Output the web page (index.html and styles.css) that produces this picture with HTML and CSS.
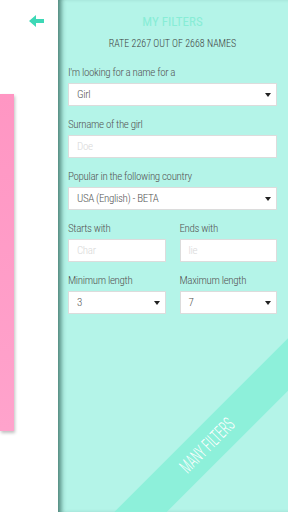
FILE: index.html
```html
<!DOCTYPE html>
<html>
<head>
<meta charset="utf-8">
<link rel="stylesheet" href="styles.css">
</head>
<body>
<div class="app">
  <aside class="side">
    <svg class="back" width="16" height="14" viewBox="0 0 16 14">
      <path d="M0 7 L7 1 L7 5 L15 5 L15 9 L7 9 L7 13 Z" fill="#3dd8b6"/>
    </svg>
    <div class="card"></div>
  </aside>
  <main class="panel">
    <h1 class="title">MY FILTERS</h1>
    <p class="subtitle">RATE 2267 OUT OF 2668 NAMES</p>
    <div class="form">
      <div class="field">
        <label class="label">I'm looking for a name for a</label>
        <div class="box select"><span class="value">Girl</span><span class="caret"></span></div>
      </div>
      <div class="field">
        <label class="label">Surname of the girl</label>
        <div class="box"><span class="placeholder">Doe</span></div>
      </div>
      <div class="field">
        <label class="label">Popular in the following country</label>
        <div class="box select"><span class="value">USA (English) - BETA</span><span class="caret"></span></div>
      </div>
      <div class="row">
        <div class="field">
          <label class="label">Starts with</label>
          <div class="box"><span class="placeholder">Char</span></div>
        </div>
        <div class="field">
          <label class="label">Ends with</label>
          <div class="box"><span class="placeholder">lie</span></div>
        </div>
      </div>
      <div class="row">
        <div class="field">
          <label class="label">Minimum length</label>
          <div class="box select"><span class="value">3</span><span class="caret"></span></div>
        </div>
        <div class="field">
          <label class="label">Maximum length</label>
          <div class="box select"><span class="value">7</span><span class="caret"></span></div>
        </div>
      </div>
    </div>
    <div class="ribbon"><span class="ribbon-text">MANY FILTERS</span></div>
  </main>
</div>
</body>
</html>
```
FILE: styles.css
```css
* { box-sizing: border-box; }
html, body { margin: 0; padding: 0; }
body {
  width: 288px;
  height: 512px;
  overflow: hidden;
  font-family: "Roboto Condensed", "Roboto", "Liberation Sans", sans-serif;
  font-weight: 300;
  background: #fff;
}
.app {
  display: flex;
  width: 288px;
  height: 512px;
}
.side {
  width: 58px;
  flex: none;
  background: #fff;
  display: flex;
  flex-direction: column;
  align-items: flex-start;
}
.back {
  display: block;
  margin: 14px 0 0 29px;
}
.card {
  margin-top: 66px;
  width: 14px;
  height: 337px;
  background: linear-gradient(#ff96c3, #ffa3cc);
  box-shadow: 1px 2px 3px rgba(0,0,0,0.25);
}
.panel {
  position: relative;
  flex: 1;
  background: #b4f4e8;
  overflow: hidden;
  padding: 14px 11px 0 10px;
  box-shadow: inset 6px 0 5px -3px rgba(30, 80, 70, 0.7);
}
.title {
  margin: 0;
  text-align: center;
  font-size: 13px;
  line-height: 16px;
  font-weight: 400;
  color: #88edd6;
}
.subtitle {
  margin: 8px 0 0;
  text-align: center;
  font-size: 10px;
  line-height: 12px;
  color: #3c3c3c;
}
.form {
  margin-top: 16px;
  display: flex;
  flex-direction: column;
  gap: 12px;
}
.row {
  display: grid;
  grid-template-columns: 1fr 1fr;
  column-gap: 14px;
}
.field {
  display: flex;
  flex-direction: column;
}
.label {
  font-size: 11px;
  line-height: 14px;
  letter-spacing: -0.35px;
  color: #555;
  margin-bottom: 3px;
}
.box {
  height: 23px;
  background: #fff;
  border: 1px solid #dcdcdc;
  display: flex;
  align-items: center;
  padding: 0 8px;
  font-size: 11px;
  letter-spacing: -0.35px;
}
.value { color: #555; flex: 1; }
.placeholder { color: #d8d8d8; }
.caret {
  width: 0;
  height: 0;
  border-left: 3px solid transparent;
  border-right: 3px solid transparent;
  border-top: 4px solid #222;
  margin-right: -3px;
}
.ribbon {
  position: absolute;
  left: -51px;
  top: 427px;
  width: 400px;
  height: 37px;
  background: #8df0da;
  transform: rotate(-45deg);
  display: flex;
  align-items: center;
  justify-content: center;
}
.ribbon-text {
  display: inline-block;
  color: #fff;
  font-family: "Roboto Condensed", "Roboto", sans-serif;
  font-weight: 300;
  font-size: 19px;
  transform: scaleX(0.62);
  white-space: nowrap;
}
```
